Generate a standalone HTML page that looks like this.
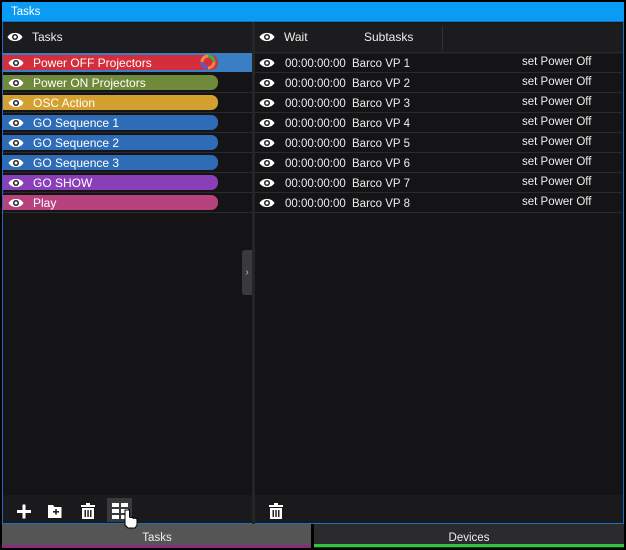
<!DOCTYPE html>
<html><head><style>
body{margin:0;width:626px;height:550px;background:#000;font-family:"Liberation Sans",sans-serif;font-size:12px;color:#eee;position:relative;overflow:hidden}
.a{position:absolute}
.title{left:2px;top:2px;width:622px;height:19px;background:#0a9bf5;color:#fff;font-size:11.5px;line-height:20px;padding-left:9px;box-sizing:border-box}
.panel{left:2px;top:21px;width:622px;height:503px;border:1px solid #1d6fc0;box-sizing:border-box;background:#141416}
.hdr{background:#1c1c1e;height:31px;top:1px}
</style></head><body>
<div class="a title">Tasks</div>
<div class="a panel">
 <div class="a hdr" style="left:0;width:249px"></div>
 <div class="a hdr" style="left:252px;width:368px"></div>
 <div class="a" style="left:249px;top:0;width:3px;height:502px;background:#252527"></div>
 <div class="a" style="left:439px;top:4px;width:1px;height:24px;background:#333"></div>
 <div class="a" style="left:0;top:473px;width:249px;height:28px;background:#1a1a1c"></div>
 <div class="a" style="left:252px;top:473px;width:368px;height:28px;background:#1a1a1c"></div>
 <div class="a" style="left:239px;top:228px;width:10px;height:45px;background:#3a3a3c;border-radius:3px 0 0 3px;color:#bbb;font-size:10px;line-height:45px;text-align:center">›</div>
 <div class="a" style="left:104px;top:476px;width:25px;height:24px;background:#3a3a3c"></div>
</div>
<svg class="a" style="left:0;top:0" width="626" height="550" font-family="Liberation Sans" font-size="12">
<defs><g id="ey"><path d="M-7.5 0C-4.5-5.5 4.5-5.5 7.5 0C4.5 5.5-4.5 5.5-7.5 0Z" fill="#fff"/><circle r="3" fill="#222"/><circle r="1.5" fill="#fff"/></g></defs>
<use href="#ey" x="15" y="37"/><text x="32" y="41" fill="#eee">Tasks</text>
<use href="#ey" x="267" y="37"/><text x="284" y="41" fill="#eee">Wait</text><text x="364" y="41" fill="#eee">Subtasks</text>
<rect x="3" y="53" width="249" height="19" fill="#3a7fc4"/>
<g>
<rect x="3" y="55" width="215" height="15" rx="7" fill="#d42e3c"/><rect x="3" y="55" width="10" height="15" fill="#d42e3c"/>
<rect x="3" y="75" width="215" height="15" rx="7" fill="#6f8a3a"/><rect x="3" y="75" width="10" height="15" fill="#6f8a3a"/>
<rect x="3" y="95" width="215" height="15" rx="7" fill="#d4a030"/><rect x="3" y="95" width="10" height="15" fill="#d4a030"/>
<rect x="3" y="115" width="215" height="15" rx="7" fill="#2f6cb8"/><rect x="3" y="115" width="10" height="15" fill="#2f6cb8"/>
<rect x="3" y="135" width="215" height="15" rx="7" fill="#2f6cb8"/><rect x="3" y="135" width="10" height="15" fill="#2f6cb8"/>
<rect x="3" y="155" width="215" height="15" rx="7" fill="#2f6cb8"/><rect x="3" y="155" width="10" height="15" fill="#2f6cb8"/>
<rect x="3" y="175" width="215" height="15" rx="7" fill="#8a3fb8"/><rect x="3" y="175" width="10" height="15" fill="#8a3fb8"/>
<rect x="3" y="195" width="215" height="15" rx="7" fill="#b8427e"/><rect x="3" y="195" width="10" height="15" fill="#b8427e"/>
</g>
<g stroke="#2a2a2c"><line x1="3" x2="252" y1="92.5" y2="92.5"/><line x1="3" x2="252" y1="112.5" y2="112.5"/><line x1="3" x2="252" y1="132.5" y2="132.5"/><line x1="3" x2="252" y1="152.5" y2="152.5"/><line x1="3" x2="252" y1="172.5" y2="172.5"/><line x1="3" x2="252" y1="192.5" y2="192.5"/><line x1="3" x2="252" y1="212.5" y2="212.5"/>
<line x1="254" x2="622" y1="52.5" y2="52.5"/><line x1="254" x2="622" y1="72.5" y2="72.5"/><line x1="254" x2="622" y1="92.5" y2="92.5"/><line x1="254" x2="622" y1="112.5" y2="112.5"/><line x1="254" x2="622" y1="132.5" y2="132.5"/><line x1="254" x2="622" y1="152.5" y2="152.5"/><line x1="254" x2="622" y1="172.5" y2="172.5"/><line x1="254" x2="622" y1="192.5" y2="192.5"/><line x1="254" x2="622" y1="212.5" y2="212.5"/></g>
<g fill="#fff" font-size="12">
<use href="#ey" x="16" y="63"/><text x="33" y="67">Power OFF Projectors</text>
<use href="#ey" x="16" y="83"/><text x="33" y="87">Power ON Projectors</text>
<use href="#ey" x="16" y="103"/><text x="33" y="107">OSC Action</text>
<use href="#ey" x="16" y="123"/><text x="33" y="127">GO Sequence 1</text>
<use href="#ey" x="16" y="143"/><text x="33" y="147">GO Sequence 2</text>
<use href="#ey" x="16" y="163"/><text x="33" y="167">GO Sequence 3</text>
<use href="#ey" x="16" y="183"/><text x="33" y="187">GO SHOW</text>
<use href="#ey" x="16" y="203"/><text x="33" y="207">Play</text>
</g>
<circle cx="208" cy="62" r="6" fill="none" stroke="#e84" stroke-width="3"/>
<path d="M208 56a6 6 0 0 1 6 6" stroke="#4a4" stroke-width="3" fill="none"/><path d="M202 62a6 6 0 0 0 6 6" stroke="#55d" stroke-width="3" fill="none"/>
<g fill="#eee" font-size="11.5">
<use href="#ey" x="267" y="63"/><text x="285" y="67">00:00:00:00</text><text x="352" y="67">Barco VP 1</text><text x="522" y="65">set Power Off</text>
<use href="#ey" x="267" y="83"/><text x="285" y="87">00:00:00:00</text><text x="352" y="87">Barco VP 2</text><text x="522" y="85">set Power Off</text>
<use href="#ey" x="267" y="103"/><text x="285" y="107">00:00:00:00</text><text x="352" y="107">Barco VP 3</text><text x="522" y="105">set Power Off</text>
<use href="#ey" x="267" y="123"/><text x="285" y="127">00:00:00:00</text><text x="352" y="127">Barco VP 4</text><text x="522" y="125">set Power Off</text>
<use href="#ey" x="267" y="143"/><text x="285" y="147">00:00:00:00</text><text x="352" y="147">Barco VP 5</text><text x="522" y="145">set Power Off</text>
<use href="#ey" x="267" y="163"/><text x="285" y="167">00:00:00:00</text><text x="352" y="167">Barco VP 6</text><text x="522" y="165">set Power Off</text>
<use href="#ey" x="267" y="183"/><text x="285" y="187">00:00:00:00</text><text x="352" y="187">Barco VP 7</text><text x="522" y="185">set Power Off</text>
<use href="#ey" x="267" y="203"/><text x="285" y="207">00:00:00:00</text><text x="352" y="207">Barco VP 8</text><text x="522" y="205">set Power Off</text>
</g>
<g fill="#fff">
<rect x="17" y="510" width="14" height="3"/><rect x="22.5" y="504.5" width="3" height="14"/>
<path d="M48 505h5l1.5 2h7v11h-13.5z"/><rect x="53" y="511" width="6" height="1.6" fill="#222"/><rect x="55.2" y="509" width="1.6" height="5.6" fill="#222"/>
<rect x="81" y="505" width="14" height="2"/><rect x="86" y="503" width="4" height="2"/><path d="M82 508h12v11h-12z"/><rect x="84.5" y="510" width="1.5" height="7" fill="#222"/><rect x="87.3" y="510" width="1.5" height="7" fill="#222"/><rect x="90" y="510" width="1.5" height="7" fill="#222"/>
<rect x="112" y="503" width="7" height="4"/><rect x="121" y="503" width="7" height="4"/><rect x="112" y="509" width="7" height="4"/><rect x="121" y="509" width="7" height="4"/><rect x="112" y="515" width="7" height="4"/><rect x="121" y="515" width="7" height="4"/>
<rect x="269" y="505" width="14" height="2"/><rect x="274" y="503" width="4" height="2"/><path d="M270 508h12v11h-12z"/><rect x="272.5" y="510" width="1.5" height="7" fill="#222"/><rect x="275.3" y="510" width="1.5" height="7" fill="#222"/><rect x="278" y="510" width="1.5" height="7" fill="#222"/>
</g>
<rect x="2" y="524" width="309" height="24" fill="#555"/><rect x="2" y="545" width="309" height="3" fill="#8a2a7a"/>
<rect x="314" y="524" width="310" height="24" fill="#2b2b2d"/><rect x="314" y="544" width="310" height="3" fill="#2ec83a"/>
<text x="157" y="541" text-anchor="middle" fill="#eee" font-size="11.5">Tasks</text>
<text x="469" y="541" text-anchor="middle" fill="#eee" font-size="11.5">Devices</text>
<path d="M125 510v15l3 3h7l2-3v-6l-2-1-1.5 0.5-1-1-2 0-1-0.5v-7z" fill="#fff" stroke="#000" stroke-width="1"/>
</svg>
</body></html>
